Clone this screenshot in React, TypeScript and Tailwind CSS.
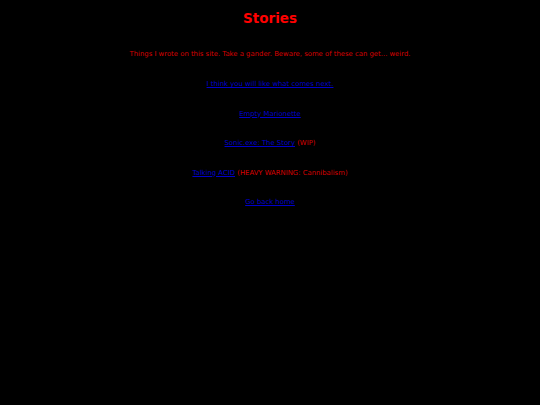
export default function App() {
  const links: { label: string; note?: string }[] = [
    { label: 'I think you will like what comes next.' },
    { label: 'Empty Marionette' },
    { label: 'Sonic.exe: The Story', note: '(WIP)' },
    { label: 'Talking ACID', note: '(HEAVY WARNING: Cannibalism)' },
    { label: 'Go back home' },
  ];

  return (
    <div
      className="min-h-[405px] w-full bg-black text-center text-[#d80000]"
      style={{ fontFamily: '"DejaVu Sans", Verdana, sans-serif' }}
    >
      <h1 className="pt-[10px] text-[13.5px] font-bold leading-[16px] text-[#ff0000]">Stories</h1>
      <p className="mt-[23.5px] text-[6.87px] leading-[9px]">
        Things I wrote on this site. Take a gander. Beware, some of these can get... weird.
      </p>
      <div className="mt-[21.5px] flex flex-col gap-[20.5px] text-[6.87px] leading-[9px]">
        {links.map((l) => (
          <p key={l.label}>
            <a href="#" className="text-[#0000cc] underline">
              {l.label}
            </a>
            {l.note && <span> {l.note}</span>}
          </p>
        ))}
      </div>
    </div>
  );
}
